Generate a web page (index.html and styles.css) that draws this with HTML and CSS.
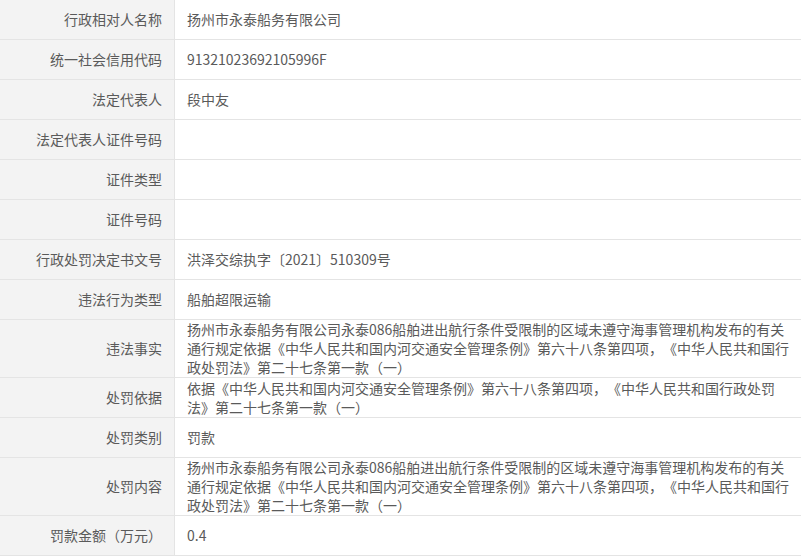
FILE: index.html
```html
<!DOCTYPE html>
<html lang="zh-CN">
<head>
    <meta charset="UTF-8">
    <meta name="viewport" content="width=device-width, initial-scale=1.0">
    <title>行政处罚信息</title>
    <link rel="stylesheet" href="styles.css">
</head>
<body>
    <div class="info-table">
        <div class="row">
            <div class="label">行政相对人名称</div>
            <div class="value">扬州市永泰船务有限公司</div>
        </div>
        <div class="row">
            <div class="label">统一社会信用代码</div>
            <div class="value">91321023692105996F</div>
        </div>
        <div class="row">
            <div class="label">法定代表人</div>
            <div class="value">段中友</div>
        </div>
        <div class="row">
            <div class="label">法定代表人证件号码</div>
            <div class="value"></div>
        </div>
        <div class="row">
            <div class="label">证件类型</div>
            <div class="value"></div>
        </div>
        <div class="row">
            <div class="label">证件号码</div>
            <div class="value"></div>
        </div>
        <div class="row">
            <div class="label">行政处罚决定书文号</div>
            <div class="value">洪泽交综执字〔2021〕510309号</div>
        </div>
        <div class="row">
            <div class="label">违法行为类型</div>
            <div class="value">船舶超限运输</div>
        </div>
        <div class="row">
            <div class="label">违法事实</div>
            <div class="value">扬州市永泰船务有限公司永泰086船舶进出航行条件受限制的区域未遵守海事管理机构发布的有关通行规定依据《中华人民共和国内河交通安全管理条例》第六十八条第四项，《中华人民共和国行政处罚法》第二十七条第一款（一）</div>
        </div>
        <div class="row">
            <div class="label">处罚依据</div>
            <div class="value">依据《中华人民共和国内河交通安全管理条例》第六十八条第四项，《中华人民共和国行政处罚法》第二十七条第一款（一）</div>
        </div>
        <div class="row">
            <div class="label">处罚类别</div>
            <div class="value">罚款</div>
        </div>
        <div class="row">
            <div class="label">处罚内容</div>
            <div class="value">扬州市永泰船务有限公司永泰086船舶进出航行条件受限制的区域未遵守海事管理机构发布的有关通行规定依据《中华人民共和国内河交通安全管理条例》第六十八条第四项，《中华人民共和国行政处罚法》第二十七条第一款（一）</div>
        </div>
        <div class="row">
            <div class="label">罚款金额（万元）</div>
            <div class="value">0.4</div>
        </div>
    </div>
</body>
</html>
```

FILE: styles.css
```css
body {
    margin: 0;
    background: #fff;
    font-family: "Noto Sans CJK SC", "Noto Sans", sans-serif;
    font-size: 14px;
    color: #5a5a5a;
    text-spacing-trim: space-all;
}
.info-table {
    width: 100%;
}
.row {
    display: flex;
    border-bottom: 1px solid #e4e4e4;
}
.label {
    width: 175px;
    flex-shrink: 0;
    box-sizing: border-box;
    background: #f3f3f3;
    border-right: 1px solid #e4e4e4;
    padding-right: 12px;
    display: flex;
    align-items: center;
    justify-content: flex-end;
    line-height: 19px;
}
.value {
    flex: 1;
    min-height: 39px;
    padding: 0 8px 0 12px;
    display: flex;
    align-items: center;
    line-height: 19px;
}
```
